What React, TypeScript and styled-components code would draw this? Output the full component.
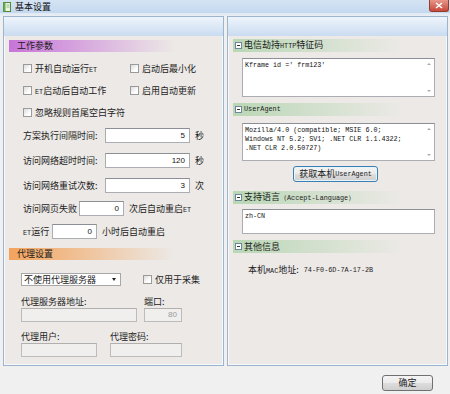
import React from "react";
import styled, { createGlobalStyle } from "styled-components";

const GlobalStyle = createGlobalStyle`
  html, body {
    margin: 0;
    padding: 0;
    background: #f0f0f0;
  }
  body {
    font-family: "Noto Sans CJK SC", "Liberation Sans", sans-serif;
    font-size: 9px;
    color: #1c1c1c;
  }
`;

const Window = styled.div`
  width: 450px;
  height: 394px;
  display: flex;
  flex-direction: column;
  background: #f0f0f0;
  overflow: hidden;
`;

const TitleBar = styled.div`
  height: 13px;
  display: flex;
  align-items: center;
  padding-left: 3px;
  background: linear-gradient(#d5e4f4, #c4d8ee);
`;

const Title = styled.span`
  margin-left: 4px;
  font-size: 9px;
  line-height: 13px;
  color: #111;
`;

const CloseBtn = styled.div`
  margin-left: auto;
  margin-right: 1px;
  align-self: flex-start;
  width: 20px;
  height: 12px;
  border-radius: 0 0 3px 3px;
  border: 1px solid #9a3a2c;
  border-top: none;
  box-sizing: border-box;
  background: linear-gradient(#e6968a, #c8493a);
  display: flex;
  align-items: center;
  justify-content: center;
`;

const Frame = styled.div`
  flex: 1;
  display: flex;
  flex-direction: column;
  background: linear-gradient(#dfe9f5 0, #f0f0f0 4px);
  padding-top: 3px;
`;

const Panels = styled.div`
  display: flex;
  gap: 3px;
  padding-left: 3px;
`;

const Panel = styled.div`
  width: 221px;
  height: 350px;
  box-sizing: border-box;
  border: 1px solid #9cb4ce;
  box-shadow: inset 0 0 0 1px #f7fafd;
  background: #ece9e6;
  display: flex;
  flex-direction: column;
`;

const PanelHead = styled.div`
  height: 19px;
  background: linear-gradient(#eef4fb, #cadcf1);
`;

const LeftBody = styled.div`
  padding: 4px 0 0 5px;
  display: flex;
  flex-direction: column;
`;

const SectionBar = styled.div<{ $color: string }>`
  width: 195px;
  height: 12px;
  line-height: 12px;
  padding-left: 8px;
  box-sizing: border-box;
  background: linear-gradient(90deg, ${(p) => p.$color} 0%, rgba(236, 233, 230, 0.35) 85%, rgba(236, 233, 230, 0) 100%);
  margin-top: ${(p) => (p.$color.startsWith("#f") ? "6px" : "0")};
`;

const CheckGrid = styled.div`
  display: grid;
  grid-template-columns: 107px 1fr;
  grid-auto-rows: 22px;
  margin-top: 5px;
  padding-left: 14px;
`;

const CheckItem = styled.label`
  display: flex;
  align-items: center;
  gap: 3px;
`;

const Box = styled.span`
  width: 9px;
  height: 9px;
  box-sizing: border-box;
  border: 1px solid #9a9a9a;
  background: linear-gradient(135deg, #dcdcdc, #ffffff 70%);
`;

const FormRow = styled.div<{ $h: number }>`
  height: ${(p) => p.$h}px;
  display: flex;
  align-items: center;
  padding-left: 14px;
`;

const Label = styled.span<{ $w: number }>`
  width: ${(p) => p.$w}px;
  flex: none;
`;

const TextBox = styled.div<{ $w: number; $h?: number; $disabled?: boolean }>`
  width: ${(p) => p.$w}px;
  height: ${(p) => p.$h ?? 15}px;
  box-sizing: border-box;
  border: 1px solid ${(p) => (p.$disabled ? "#bcbcbc" : "#abadb3")};
  border-top-color: ${(p) => (p.$disabled ? "#b0b0b0" : "#8c8f96")};
  background: ${(p) => (p.$disabled ? "#f0efee" : "#ffffff")};
  color: ${(p) => (p.$disabled ? "#9a9a9a" : "#111")};
  font-family: "Liberation Sans", sans-serif;
  font-size: 8px;
  text-align: right;
  padding-right: 4px;
  line-height: ${(p) => (p.$h ?? 15) - 2}px;
`;

const Unit = styled.span`
  margin-left: 5px;
`;

const Proxy = styled.div`
  padding-left: 12px;
  display: flex;
  flex-direction: column;
`;

const SelectRow = styled.div`
  margin-top: 13px;
  height: 13px;
  display: flex;
  align-items: center;
  gap: 22px;
`;

const Select = styled.div`
  width: 100px;
  height: 13px;
  box-sizing: border-box;
  border: 1px solid #a7a7a7;
  background: #fff;
  padding: 0 4px 0 2px;
  display: flex;
  align-items: center;
  justify-content: space-between;
  line-height: 11px;
`;

const Arrow = styled.span`
  width: 0;
  height: 0;
  border-left: 2.5px solid transparent;
  border-right: 2.5px solid transparent;
  border-top: 3px solid #222;
`;

const FieldRow = styled.div<{ $gap: number; $top: number }>`
  display: flex;
  gap: ${(p) => p.$gap}px;
  margin-top: ${(p) => p.$top}px;
`;

const Field = styled.div<{ $w: number }>`
  width: ${(p) => p.$w}px;
  display: flex;
  flex-direction: column;
  gap: 1px;
`;

const FieldLabel = styled.span`
  height: 10px;
  line-height: 10px;
`;

const RightBody = styled.div`
  padding: 3px 0 0 5px;
  display: flex;
  flex-direction: column;
`;

const GroupBar = styled.div<{ $top?: number }>`
  width: 199px;
  height: 13px;
  margin-top: ${(p) => p.$top ?? 0}px;
  padding-left: 2px;
  box-sizing: border-box;
  display: flex;
  align-items: center;
  gap: 2px;
  background: linear-gradient(90deg, #b9d7b5 0%, rgba(236, 233, 230, 0.4) 85%, rgba(236, 233, 230, 0) 100%);
  line-height: 13px;
`;

const Toggle = styled.span`
  width: 7px;
  height: 7px;
  box-sizing: border-box;
  border: 1px solid #6f86a3;
  background: #fff;
  display: flex;
  align-items: center;
  justify-content: center;
  &::after {
    content: "";
    width: 3px;
    height: 1px;
    background: #333;
  }
`;

const Asc = styled.span`
  font-family: "Liberation Mono", monospace;
  font-size: 6.8px;
`;

const TextArea = styled.div<{ $h: number; $top: number }>`
  width: 193px;
  height: ${(p) => p.$h}px;
  margin: ${(p) => p.$top}px 0 0 9px;
  box-sizing: border-box;
  border: 1px solid #abadb3;
  border-top-color: #8c8f96;
  background: #fff;
  display: flex;
`;

const AreaText = styled.div`
  flex: 1;
  padding: 2px 0 0 2px;
  font-family: "Liberation Mono", monospace;
  font-size: 6.7px;
  line-height: 9px;
  white-space: pre;
  color: #111;
`;

const Scroll = styled.div`
  width: 10px;
  display: flex;
  flex-direction: column;
  justify-content: space-between;
  align-items: center;
  padding: 4px 0;
`;

const TriUp = styled.span`
  border-left: 2px solid transparent;
  border-right: 2px solid transparent;
  border-bottom: 2px solid #a9a9a9;
`;

const TriDown = styled.span`
  border-left: 2px solid transparent;
  border-right: 2px solid transparent;
  border-top: 2px solid #a9a9a9;
`;

const Button = styled.div<{ $w: number }>`
  width: ${(p) => p.$w}px;
  height: 16px;
  box-sizing: border-box;
  border: 1px solid #707070;
  border-radius: 3px;
  background: linear-gradient(#f4f4f4 0%, #ebebeb 48%, #dddddd 52%, #cfcfcf 100%);
  display: flex;
  align-items: center;
  justify-content: center;
  line-height: 14px;
`;

const UaButton = styled(Button)`
  margin: 5px 0 0 60px;
  border-color: #3c7fb1;
  box-shadow: inset 0 0 0 1px #e6f4fc;
`;

const Info = styled.div`
  margin-top: 12px;
  padding-left: 15px;
  height: 10px;
  line-height: 10px;
  display: flex;
  gap: 5px;
`;

const Footer = styled.div`
  display: flex;
  justify-content: flex-end;
  padding: 9px 17px 0 0;
`;

const AppIcon = () => (
  <svg width="8" height="10" viewBox="0 0 8 10">
    <rect x="0.5" y="0.5" width="7" height="9" fill="#e9f5df" stroke="#4c8a3a" />
    <rect x="0.5" y="0.5" width="2" height="9" fill="#6aa84f" />
    <line x1="3.5" y1="3" x2="6.5" y2="3" stroke="#7aa96a" strokeWidth="0.8" />
    <line x1="3.5" y1="5" x2="6.5" y2="5" stroke="#7aa96a" strokeWidth="0.8" />
  </svg>
);

const Check = ({ children }: { children: React.ReactNode }) => (
  <CheckItem>
    <Box />
    <span>{children}</span>
  </CheckItem>
);

const App = () => {
  return (
    <>
      <GlobalStyle />
      <Window>
        <TitleBar>
          <AppIcon />
          <Title>基本设置</Title>
          <CloseBtn>
            <svg width="8" height="7" viewBox="0 0 8 7">
              <path d="M1 1 L7 6 M7 1 L1 6" stroke="#fff" strokeWidth="1.6" />
            </svg>
          </CloseBtn>
        </TitleBar>
        <Frame>
          <Panels>
            <Panel>
              <PanelHead />
              <LeftBody>
                <SectionBar $color="#c774d8">工作参数</SectionBar>
                <CheckGrid>
                  <Check>开机自动运行<Asc>ET</Asc></Check>
                  <Check>启动后最小化</Check>
                  <Check><Asc>ET</Asc>启动后自动工作</Check>
                  <Check>启用自动更新</Check>
                  <Check>忽略规则首尾空白字符</Check>
                </CheckGrid>
                <FormRow $h={25}>
                  <Label $w={82}>方案执行间隔时间:</Label>
                  <TextBox $w={85}>5</TextBox>
                  <Unit>秒</Unit>
                </FormRow>
                <FormRow $h={25}>
                  <Label $w={82}>访问网络超时时间:</Label>
                  <TextBox $w={85}>120</TextBox>
                  <Unit>秒</Unit>
                </FormRow>
                <FormRow $h={24}>
                  <Label $w={82}>访问网络重试次数:</Label>
                  <TextBox $w={85}>3</TextBox>
                  <Unit>次</Unit>
                </FormRow>
                <FormRow $h={23}>
                  <Label $w={56}>访问网页失败</Label>
                  <TextBox $w={45}>0</TextBox>
                  <Unit>次后自动重启<Asc>ET</Asc></Unit>
                </FormRow>
                <FormRow $h={22}>
                  <Label $w={29}><Asc>ET</Asc>运行</Label>
                  <TextBox $w={45}>0</TextBox>
                  <Unit>小时后自动重启</Unit>
                </FormRow>
                <SectionBar $color="#f3a35c">代理设置</SectionBar>
                <Proxy>
                  <SelectRow>
                    <Select>
                      <span>不使用代理服务器</span>
                      <Arrow />
                    </Select>
                    <Check>仅用于采集</Check>
                  </SelectRow>
                  <FieldRow $gap={7} $top={11}>
                    <Field $w={116}>
                      <FieldLabel>代理服务器地址:</FieldLabel>
                      <TextBox $w={116} $h={14} $disabled />
                    </Field>
                    <Field $w={38}>
                      <FieldLabel>端口:</FieldLabel>
                      <TextBox $w={38} $h={14} $disabled>80</TextBox>
                    </Field>
                  </FieldRow>
                  <FieldRow $gap={13} $top={10}>
                    <Field $w={76}>
                      <FieldLabel>代理用户:</FieldLabel>
                      <TextBox $w={76} $h={14} $disabled />
                    </Field>
                    <Field $w={72}>
                      <FieldLabel>代理密码:</FieldLabel>
                      <TextBox $w={72} $h={14} $disabled />
                    </Field>
                  </FieldRow>
                </Proxy>
              </LeftBody>
            </Panel>
            <Panel>
              <PanelHead />
              <RightBody>
                <GroupBar>
                  <Toggle />
                  <span>电信劫持<Asc>HTTP</Asc>特征码</span>
                </GroupBar>
                <TextArea $h={39} $top={6}>
                  <AreaText>{"Kframe id =' frm123'"}</AreaText>
                  <Scroll>
                    <TriUp />
                    <TriDown />
                  </Scroll>
                </TextArea>
                <GroupBar $top={6}>
                  <Toggle />
                  <Asc>UserAgent</Asc>
                </GroupBar>
                <TextArea $h={38} $top={7}>
                  <AreaText>
                    {"Mozilla/4.0 (compatible; MSIE 6.0;\nWindows NT 5.2; SV1; .NET CLR 1.1.4322;\n.NET CLR 2.0.50727)"}
                  </AreaText>
                  <Scroll>
                    <TriUp />
                    <TriDown />
                  </Scroll>
                </TextArea>
                <UaButton $w={85}>
                  获取本机<Asc>UserAgent</Asc>
                </UaButton>
                <GroupBar $top={9}>
                  <Toggle />
                  <span>支持语言<Asc>（Accept-Language）</Asc></span>
                </GroupBar>
                <TextArea $h={25} $top={5}>
                  <AreaText>zh-CN</AreaText>
                </TextArea>
                <GroupBar $top={6}>
                  <Toggle />
                  <span>其他信息</span>
                </GroupBar>
                <Info>
                  <span>本机<Asc>MAC</Asc>地址:</span>
                  <Asc>74-F0-6D-7A-17-2B</Asc>
                </Info>
              </RightBody>
            </Panel>
          </Panels>
          <Footer>
            <Button $w={51}>确定</Button>
          </Footer>
        </Frame>
      </Window>
    </>
  );
};

export default App;
